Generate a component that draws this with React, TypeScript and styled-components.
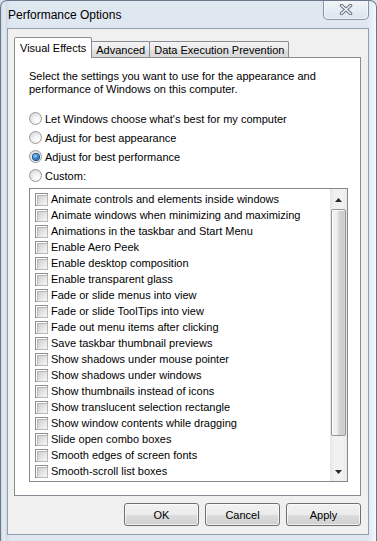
import styled, { createGlobalStyle } from 'styled-components'

const GlobalStyle = createGlobalStyle`
  html, body {
    margin: 0;
    padding: 0;
    background: #d9e3ee;
  }
  body {
    font-family: "Liberation Sans", Arial, sans-serif;
    font-size: 11px;
    color: #000;
  }
  * {
    box-sizing: border-box;
  }
`

const effects: string[] = [
  'Animate controls and elements inside windows',
  'Animate windows when minimizing and maximizing',
  'Animations in the taskbar and Start Menu',
  'Enable Aero Peek',
  'Enable desktop composition',
  'Enable transparent glass',
  'Fade or slide menus into view',
  'Fade or slide ToolTips into view',
  'Fade out menu items after clicking',
  'Save taskbar thumbnail previews',
  'Show shadows under mouse pointer',
  'Show shadows under windows',
  'Show thumbnails instead of icons',
  'Show translucent selection rectangle',
  'Show window contents while dragging',
  'Slide open combo boxes',
  'Smooth edges of screen fonts',
  'Smooth-scroll list boxes',
]

const choices = [
  { label: "Let Windows choose what's best for my computer", checked: false },
  { label: 'Adjust for best appearance', checked: false },
  { label: 'Adjust for best performance', checked: true },
  { label: 'Custom:', checked: false },
]

const Window = styled.div`
  width: 377px;
  height: 541px;
  display: flex;
  flex-direction: column;
  padding: 0 7px 6px 6px;
  border: 1px solid #6a7889;
  border-bottom: none;
  border-radius: 7px 7px 0 0;
  overflow: hidden;
  background:
    linear-gradient(to right, #cdd6e0 0, #e6edf4 3px, #d3dce6 5px, #dfe7f0 9px, #dfe7f0 calc(100% - 9px), #e9f0f8 calc(100% - 4px), #f4f8fc 100%),
    #dae3ed;
`

const TitleBar = styled.div`
  height: 27px;
  display: flex;
  justify-content: space-between;
  align-items: flex-start;
`

const Title = styled.span`
  margin: 7px 0 0 1px;
  font-size: 12px;
  line-height: 14px;
  color: #000;
`

const CloseButton = styled.div`
  width: 46px;
  height: 20px;
  margin-top: -1px;
  display: flex;
  align-items: center;
  justify-content: center;
  border: 1px solid rgba(72, 88, 110, 0.6);
  border-top: none;
  border-radius: 0 0 5px 5px;
  background: linear-gradient(#f3f6fa, #e4ebf3 60%, #dae3ed);
  box-shadow: inset 0 0 0 1px rgba(255, 255, 255, 0.55);
`

const Client = styled.div`
  flex: 1;
  display: flex;
  flex-direction: column;
  background: #f0f0f0;
  border: 1px solid #939eab;
`

const TabRow = styled.div`
  height: 20px;
  margin: 8px 0 0 6px;
  display: flex;
  align-items: flex-end;
`

const Tab = styled.div<{ $active?: boolean }>`
  height: ${p => (p.$active ? 21 : 16)}px;
  margin-bottom: ${p => (p.$active ? -1 : 0)}px;
  padding: 0 ${p => (p.$active ? 5 : 4)}px;
  display: flex;
  align-items: center;
  border: 1px solid #898c95;
  border-bottom: none;
  border-radius: 2px 2px 0 0;
  background: ${p => (p.$active ? '#fff' : 'linear-gradient(#f4f4f4, #ebebeb 50%, #dedede 51%, #d9d9d9)')};
  position: relative;
  z-index: ${p => (p.$active ? 1 : 0)};
  white-space: nowrap;

  & + & {
    margin-left: -1px;
  }
`

const Panel = styled.div`
  height: 439px;
  margin: 0 7px 0 6px;
  padding: 12px 12px 0 14px;
  display: flex;
  flex-direction: column;
  background: #fff;
  border: 1px solid #898c95;
`

const Intro = styled.p`
  margin: 0;
  line-height: 13px;
`

const RadioGroup = styled.div`
  margin-top: 13px;
  display: flex;
  flex-direction: column;
`

const RadioRow = styled.label`
  height: 19px;
  display: flex;
  align-items: center;
  gap: 3px;
`

const RadioCircle = styled.span<{ $checked?: boolean }>`
  width: 13px;
  height: 13px;
  flex-shrink: 0;
  display: flex;
  align-items: center;
  justify-content: center;
  border: 1px solid #979797;
  border-radius: 50%;
  background: radial-gradient(circle at 65% 70%, #ffffff 0, #f2f2f2 35%, #d2d2d2 100%);

  &::after {
    content: '';
    display: ${p => (p.$checked ? 'block' : 'none')};
    width: 6px;
    height: 6px;
    border-radius: 50%;
    background: radial-gradient(circle at 40% 35%, #9fdcff 0, #2c86d3 45%, #0c3f78 100%);
    box-shadow: 0 0 0 1px #1f4a7c;
  }
`

const ListBox = styled.div`
  height: 294px;
  margin-top: 3px;
  display: flex;
  border: 1px solid #828790;
  background: #fff;
`

const Items = styled.div`
  flex: 1;
  padding: 2px 0 0 5px;
  display: flex;
  flex-direction: column;
`

const Item = styled.div`
  height: 16px;
  display: flex;
  align-items: center;
  gap: 3px;
  white-space: nowrap;
`

const CheckBox = styled.span`
  width: 13px;
  height: 13px;
  flex-shrink: 0;
  padding: 1px;
  border: 1px solid #8e8f8f;
  background: #fff;

  &::after {
    content: '';
    display: block;
    width: 100%;
    height: 100%;
    border: 1px solid #b9b9b9;
    background: linear-gradient(135deg, #cdcdcd 0%, #e4e4e4 50%, #f7f7f7 100%);
  }
`

const ScrollBar = styled.div`
  width: 17px;
  display: flex;
  flex-direction: column;
  background: linear-gradient(to right, #e6e6e6, #f1f1f1 25%, #f1f1f1 75%, #e8e8e8);
`

const ScrollButton = styled.div`
  height: 20px;
  padding-top: 2px;
  display: flex;
  align-items: center;
  justify-content: center;
`

const Thumb = styled.div`
  height: 227px;
  margin: 0 1px;
  border: 1px solid #969696;
  border-radius: 2px;
  background: linear-gradient(to right, #f5f5f5 0%, #ececec 45%, #d9d9d9 50%, #cbcbcb 85%, #d6d6d6 100%);
  box-shadow: inset 1px 1px 0 rgba(255, 255, 255, 0.8);
`

const Track = styled.div`
  flex: 1;
`

const ButtonRow = styled.div`
  margin: 7px 7px 0 0;
  display: flex;
  justify-content: flex-end;
  gap: 6px;
`

const Button = styled.button`
  width: 75px;
  height: 23px;
  padding: 0;
  border: 1px solid #707070;
  border-radius: 3px;
  background: linear-gradient(#f2f2f2 0%, #ebebeb 50%, #dddddd 51%, #cfcfcf 100%);
  box-shadow: inset 0 0 0 1px rgba(255, 255, 255, 0.7);
  font-family: "Liberation Sans", Arial, sans-serif;
  font-size: 11px;
  color: #000;
`

function Arrow({ down }: { down?: boolean }) {
  return (
    <svg width="7" height="4" viewBox="0 0 7 4">
      <polygon points={down ? '0,0 7,0 3.5,4' : '0,4 7,4 3.5,0'} fill="#2a2a2a" />
    </svg>
  )
}

function CloseGlyph() {
  return (
    <svg width="14" height="11" viewBox="0 0 14 11">
      <path d="M2.5 1.5 L11.5 9.5 M11.5 1.5 L2.5 9.5" stroke="#6c7682" strokeWidth="3.6" strokeLinecap="round" fill="none" />
      <path d="M2.5 1.5 L11.5 9.5 M11.5 1.5 L2.5 9.5" stroke="#f5f7fa" strokeWidth="1.4" strokeLinecap="round" fill="none" />
    </svg>
  )
}

function App() {
  return (
    <>
      <GlobalStyle />
      <Window>
        <TitleBar>
          <Title>Performance Options</Title>
          <CloseButton>
            <CloseGlyph />
          </CloseButton>
        </TitleBar>
        <Client>
          <TabRow>
            <Tab $active>Visual Effects</Tab>
            <Tab>Advanced</Tab>
            <Tab>Data Execution Prevention</Tab>
          </TabRow>
          <Panel>
            <Intro>
              Select the settings you want to use for the appearance and performance of Windows on this computer.
            </Intro>
            <RadioGroup>
              {choices.map(c => (
                <RadioRow key={c.label}>
                  <RadioCircle $checked={c.checked} />
                  {c.label}
                </RadioRow>
              ))}
            </RadioGroup>
            <ListBox>
              <Items>
                {effects.map(e => (
                  <Item key={e}>
                    <CheckBox />
                    {e}
                  </Item>
                ))}
              </Items>
              <ScrollBar>
                <ScrollButton>
                  <Arrow />
                </ScrollButton>
                <Thumb />
                <Track />
                <ScrollButton>
                  <Arrow down />
                </ScrollButton>
              </ScrollBar>
            </ListBox>
          </Panel>
          <ButtonRow>
            <Button>OK</Button>
            <Button>Cancel</Button>
            <Button>Apply</Button>
          </ButtonRow>
        </Client>
      </Window>
    </>
  )
}

export default App
